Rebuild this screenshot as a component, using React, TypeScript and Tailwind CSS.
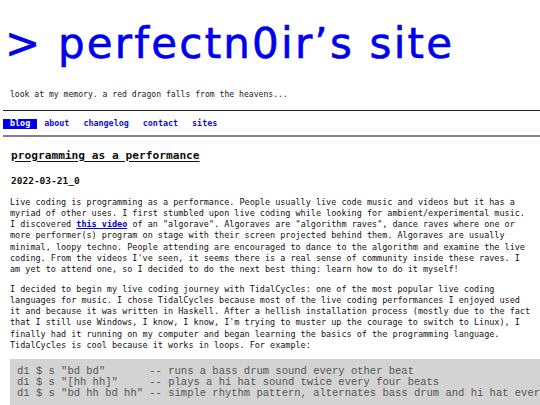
import React from "react";

const mono = "font-['DejaVu_Sans_Mono',monospace]";

const navItems = ["blog", "about", "changelog", "contact", "sites"];

const code = `d1 $ s "bd bd"       -- runs a bass drum sound every other beat
d1 $ s "[hh hh]"     -- plays a hi hat sound twice every four beats
d1 $ s "bd hh bd hh" -- simple rhythm pattern, alternates bass drum and hi hat every other beat`;

export default function App() {
    return (
        <div className={`w-[540px] h-[405px] overflow-hidden bg-white text-[#111] ${mono}`}>
            <h1 className="pl-[5px] pt-[20px] text-[42px] leading-[48px] tracking-[2.2px] text-[#0000ee] font-['DejaVu_Sans',sans-serif] font-normal [-webkit-text-stroke:0.6px_#0000ee]">
                &gt; perfectn0ir’s site
            </h1>

            <p className="pl-[10px] mt-[21px] text-[8.1px] leading-[11px] text-[#222]">
                look at my memory. a red dragon falls from the heavens...
            </p>

            <nav className="ml-[3px] mt-[10px] border-t border-[#222] border-b-2 border-b-[#808080] pt-[8px] pb-[6px]">
                <ul className="flex text-[8.4px] leading-[9.5px] font-bold">
                    {navItems.map((item) => (
                        <li key={item}>
                            <a
                                href="#"
                                className={
                                    item === "blog"
                                        ? "block px-[7px] bg-[#0000ee] text-white"
                                        : "block px-[7px] text-[#1010cc]"
                                }
                            >
                                {item}
                            </a>
                        </li>
                    ))}
                </ul>
            </nav>

            <main className="pl-[10px] pr-[8px]">
                <h2 className="mt-[12px] pl-[1px] text-[11.2px] leading-[14px] font-bold underline underline-offset-[2px]">
                    programming as a performance
                </h2>
                <h3 className="mt-[12px] pl-[1px] text-[9.5px] leading-[12px] font-bold">
                    2022-03-21_0
                </h3>

                <div className="mt-[10px] text-[8.47px] leading-[11.3px] space-y-[8px]">
                    <p>
                        Live coding is programming as a performance. People usually live code music and videos but it has a
                        myriad of other uses. I first stumbled upon live coding while looking for ambient/experimental music.
                        I discovered{" "}
                        <a href="#" className="font-bold text-[#0000cc] underline">this video</a>{" "}
                        of an "algorave". Algoraves are "algorithm raves", dance raves where one or more performer(s) program
                        on stage with their screen projected behind them. Algoraves are usually minimal, loopy techno. People
                        attending are encouraged to dance to the algorithm and examine the live coding. From the videos I've
                        seen, it seems there is a real sense of community inside these raves. I am yet to attend one, so I
                        decided to do the next best thing: learn how to do it myself!
                    </p>
                    <p>
                        I decided to begin my live coding journey with TidalCycles: one of the most popular live coding
                        languages for music. I chose TidalCycles because most of the live coding performances I enjoyed used
                        it and because it was written in Haskell. After a hellish installation process (mostly due to the fact
                        that I still use Windows, I know, I know, I'm trying to muster up the courage to switch to Linux), I
                        finally had it running on my computer and began learning the basics of the programming language.
                        TidalCycles is cool because it works in loops. For example:
                    </p>
                </div>
            </main>

            <pre className="ml-[10px] mt-[8px] pl-[7px] pt-[7px] pb-[8px] bg-[#d3d3d3] text-[#555] text-[10.5px] leading-[10.9px] font-['Liberation_Mono',monospace] overflow-hidden whitespace-pre">
                {code}
            </pre>
        </div>
    );
}
